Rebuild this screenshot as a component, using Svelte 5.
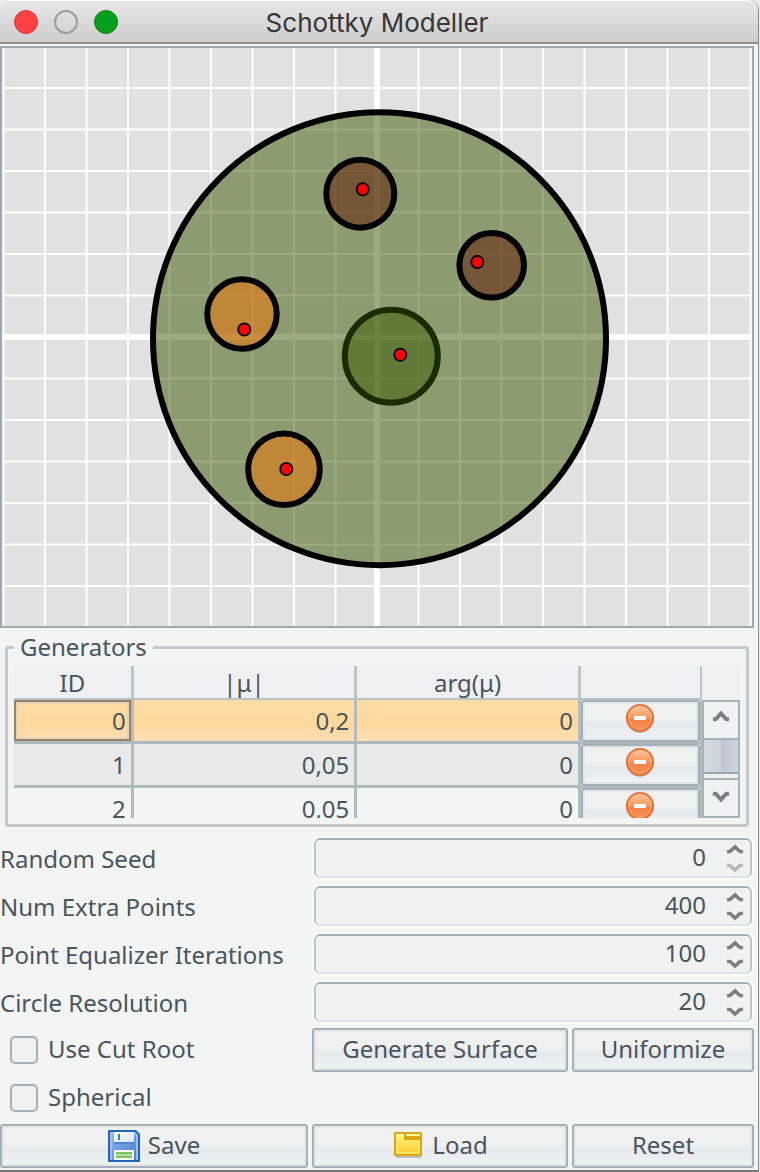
<script>
  const step = 41.5;
  const verticals = Array.from({ length: 19 }, (_, i) => 377 + (i - 9) * step);
  const horizontals = Array.from({ length: 13 }, (_, i) => 337 + (i - 6) * step);

  const discs = [
    { x: 360.3, y: 193.7, r: 34, fill: '#5e1200' },
    { x: 491.7, y: 265.3, r: 32.3, fill: '#5e1200' },
    { x: 242, y: 314, r: 34.7, fill: '#f67200' },
    { x: 284, y: 469.3, r: 35.8, fill: '#f67200' }
  ];

  const points = [
    [362.7, 189.3],
    [477.3, 262],
    [244.3, 329.5],
    [400.3, 354.8],
    [286.3, 469]
  ];

  let selected = $state(0);
  let rows = $state([
    { id: 0, mu: '0,2', arg: '0' },
    { id: 1, mu: '0,05', arg: '0' },
    { id: 2, mu: '0,05', arg: '0' }
  ]);

  let settings = $state([
    { key: 'seed', label: 'Random Seed', value: 0 },
    { key: 'extra', label: 'Num Extra Points', value: 400 },
    { key: 'iterations', label: 'Point Equalizer Iterations', value: 100 },
    { key: 'resolution', label: 'Circle Resolution', value: 20 }
  ]);

  function remove(id) {
    rows = rows.filter((row) => row.id !== id);
  }
</script>

{#snippet chevron(down, height)}
  <svg width="18" {height} viewBox="0 0 18 12" preserveAspectRatio="none" aria-hidden="true">
    <path
      d={down ? 'M1 2.5 4 3 9 8.5 14 3 17 2.5' : 'M1 9.5 4 9 9 3.5 14 9 17 9.5'}
      fill="none"
      stroke="#7e7e7e"
      stroke-width="4"
    />
  </svg>
{/snippet}

<main class="window">
  <header class="titlebar">
    <div class="lights">
      <button class="light close" aria-label="Close"></button>
      <button class="light minimize" aria-label="Minimize"></button>
      <button class="light zoom" aria-label="Zoom"></button>
    </div>
    <h1>Schottky Modeller</h1>
  </header>

  <div class="content">
    <div class="canvas">
      <svg viewBox="2 48 750 578" role="img" aria-label="Schottky circles">
        <rect x="2" y="48" width="750" height="578" fill="#e1e1e1" />
        <g stroke="#fff" stroke-width="2">
          {#each verticals as x, i}
            <line x1={x} x2={x} y1="48" y2="626" stroke-width={i === 9 ? 6 : 2} />
          {/each}
          {#each horizontals as y, i}
            <line x1="2" x2="752" y1={y} y2={y} stroke-width={i === 6 ? 6 : 2} />
          {/each}
        </g>
        <g stroke="#000" stroke-width="6" fill-opacity="0.5">
          <circle cx="391.3" cy="356.3" r="46.5" fill="#345a00" />
          <circle cx="379.5" cy="338.7" r="226.5" fill="#375700" />
          {#each discs as d}
            <circle cx={d.x} cy={d.y} r={d.r} fill={d.fill} />
          {/each}
        </g>
        <g fill="#f00" stroke="#000" stroke-width="1.8">
          {#each points as [x, y]}
            <circle cx={x} cy={y} r="6.1" />
          {/each}
        </g>
      </svg>
    </div>

    <fieldset class="generators">
      <legend>Generators</legend>
      <div class="viewport">
        <table>
          <colgroup>
            <col class="narrow" /><col class="wide" /><col class="wide" /><col class="action" />
          </colgroup>
          <thead>
            <tr><th>ID</th><th>|μ|</th><th>arg(μ)</th><th aria-label="Remove"></th></tr>
          </thead>
          <tbody>
            {#each rows as row, i (row.id)}
              <tr class:selected={selected === i} onclick={() => (selected = i)}>
                <td>{row.id}</td>
                <td>{row.mu}</td>
                <td>{row.arg}</td>
                <td class="cell-action">
                  <button class="push" aria-label="Remove generator {row.id}" onclick={() => remove(row.id)}>
                    <svg width="32" height="34" viewBox="0 0 32 34" aria-hidden="true">
                      <defs>
                        <linearGradient id="orb{row.id}" x1="0" y1="0" x2="0" y2="1">
                          <stop offset="0" stop-color="#ffc79c" />
                          <stop offset="0.48" stop-color="#f99a60" />
                          <stop offset="0.55" stop-color="#f28448" />
                          <stop offset="1" stop-color="#fb8c4c" />
                        </linearGradient>
                      </defs>
                      <ellipse cx="16" cy="17" rx="12.5" ry="13" fill="#c9b9b0" />
                      <circle cx="16" cy="15" r="13.2" fill="url(#orb{row.id})" stroke="#e0703a" stroke-width="1.8" />
                      <circle cx="16" cy="15" r="11" fill="none" stroke="#ffb98c" stroke-opacity="0.6" />
                      <rect x="10" y="13" width="12" height="4" fill="#fff" />
                    </svg>
                  </button>
                </td>
              </tr>
            {/each}
          </tbody>
        </table>
        <div class="scroll">
          <button class="arrow" aria-label="Scroll up">{@render chevron(false, 12)}</button>
          <div class="track"><div class="thumb"></div></div>
          <button class="arrow" aria-label="Scroll down">{@render chevron(true, 12)}</button>
        </div>
      </div>
    </fieldset>

    <div class="form">
      {#each settings as s (s.key)}
        <label class="caption" for={s.key}>{s.label}</label>
        <div class="spinner">
          <input id={s.key} type="text" inputmode="numeric" bind:value={s.value} />
          <div class="steps">
            <button aria-label="Increase {s.label}" onclick={() => (s.value = Number(s.value) + 1)}>
              {@render chevron(false, 10)}
            </button>
            <button
              aria-label="Decrease {s.label}"
              disabled={Number(s.value) <= 0}
              onclick={() => (s.value = Number(s.value) - 1)}
            >
              {@render chevron(true, 10)}
            </button>
          </div>
        </div>
      {/each}

      <label class="check"><input type="checkbox" /><span>Use Cut Root</span></label>
      <button class="push"><span>Generate Surface</span></button>
      <button class="push"><span>Uniformize</span></button>

      <label class="check full"><input type="checkbox" /><span>Spherical</span></label>

      <button class="push">
        <svg width="32" height="32" viewBox="0 0 32 32" aria-hidden="true">
          <defs>
            <linearGradient id="disk" x1="0" y1="0" x2="1" y2="1">
              <stop offset="0" stop-color="#8db4ee" />
              <stop offset="1" stop-color="#4a7fd0" />
            </linearGradient>
            <linearGradient id="shutter" x1="0" y1="0" x2="1" y2="1">
              <stop offset="0" stop-color="#fff" />
              <stop offset="1" stop-color="#d3e2f8" />
            </linearGradient>
          </defs>
          <path d="M1 0H28L32 4V31Q32 32 31 32H1Q0 32 0 31V1Q0 0 1 0Z" fill="#2264b8" />
          <path d="M2 2H27L30 5V30H2Z" fill="#9cc0f2" />
          <path d="M4 4H26L28 6V30H4Z" fill="url(#disk)" />
          <rect x="6" y="2" width="20" height="10" fill="url(#shutter)" />
          <rect x="10" y="4" width="2" height="6" fill="#3a78cb" />
          <rect x="6" y="12" width="20" height="2" fill="#5386cc" />
          <rect x="6" y="20" width="20" height="10" fill="#fff" />
          <rect x="8" y="22" width="16" height="6" fill="#7cc35d" />
          <rect x="8" y="24" width="16" height="2" fill="#b5dca3" />
          <rect x="2" y="30" width="28" height="2" fill="#2264b8" />
        </svg>
        <span>Save</span>
      </button>
      <button class="push">
        <svg width="32" height="32" viewBox="0 0 32 32" aria-hidden="true">
          <defs>
            <linearGradient id="folder" x1="0" y1="0" x2="0" y2="1">
              <stop offset="0" stop-color="#fff17a" />
              <stop offset="1" stop-color="#f8cb2e" />
            </linearGradient>
          </defs>
          <rect x="4" y="26" width="25" height="2" fill="#000" fill-opacity="0.2" />
          <rect x="2" y="2" width="28" height="24" rx="1" fill="#dba514" />
          <rect x="4" y="4" width="8" height="4" fill="#ffff9a" />
          <rect x="14" y="4" width="14" height="2" fill="#fffba5" />
          <path d="M4 6H12V10H28V24H4Z" fill="url(#folder)" />
          <path d="M4 22H28V24H4ZM26 10H28V24H26ZM4 10H6V24H4Z" fill="#fbe06b" />
        </svg>
        <span>Load</span>
      </button>
      <button class="push"><span>Reset</span></button>
    </div>
  </div>
</main>

<style>
  :global(body) {
    background: #e9ebea;
  }

  .window {
    box-sizing: border-box;
    margin-right: 1px;
    border-right: 1px solid #8b8d8c;
    border-bottom: 2px solid #747675;
    background: #f3f5f4;
    border-radius: 10px 10px 0 0;
    overflow: hidden;
    color: #4a545e;
    font: 24px/32px "Noto Sans", "Open Sans", sans-serif;
  }

  button,
  input {
    font: inherit;
    color: inherit;
    margin: 0;
    padding: 0;
  }

  svg {
    display: block;
    flex: none;
  }

  .titlebar {
    box-sizing: border-box;
    height: 44px;
    padding: 0 14px;
    display: grid;
    grid-template-columns: 1fr auto 1fr;
    align-items: center;
    border-top: 1px solid #f6f6f6;
    border-bottom: 2px solid #918f89;
    background: linear-gradient(#e7e7e7, #cdcdcd);
  }

  .lights {
    display: flex;
    gap: 16px;
  }

  .light {
    box-sizing: border-box;
    width: 24px;
    height: 24px;
    border: 1px solid;
    border-radius: 50%;
  }

  .close {
    background: #ff4141;
    border-color: #dd3237;
  }

  .minimize {
    background: transparent;
    border: 2px solid #9c9c9c;
  }

  .zoom {
    background: #07a01c;
    border-color: #0a8412;
  }

  h1 {
    margin: 0;
    padding: 2px 4px 0 0;
    color: #363636;
    font: 400 26px/36px Inter, Roboto, sans-serif;
  }

  .content {
    padding: 2px 4px 2px 0;
  }

  .canvas {
    border: 2px solid #9ca9b1;
  }

  .canvas svg {
    width: 100%;
    height: auto;
  }

  .generators {
    margin: 3px 5px 0;
    padding: 3px 6px 6px;
    border: 3px solid #c2c8cb;
    border-radius: 3px;
    min-width: 0;
  }

  legend {
    padding: 0 6px;
  }

  .viewport {
    display: flex;
    height: 152px;
    overflow: hidden;
    background: #eff0f2;
  }

  table {
    flex: 1;
    min-width: 0;
    height: max-content;
    table-layout: fixed;
    border-collapse: separate;
    border-spacing: 0;
    background: #f3f5f4;
  }

  .narrow {
    width: 17.4%;
  }

  .wide {
    width: 32.5%;
  }

  th,
  td {
    box-sizing: border-box;
    padding: 0 5px;
    border-right: 3px solid #b1bcc1;
    border-bottom: 3px solid #adb8bd;
  }

  th {
    height: 34px;
    padding-top: 2px;
    line-height: 30px;
    border-right-color: #bcc5ca;
    border-bottom: 2px solid #b8c2c7;
    background: #eff0f2;
    font-weight: 400;
    text-align: center;
  }

  th:last-child {
    border-right-width: 2px;
  }

  td {
    height: 44px;
    text-align: right;
  }

  tbody tr:nth-child(even) {
    background: #e8eae9;
  }

  tbody tr.selected td:not(.cell-action) {
    background: linear-gradient(#ffdda8, #ffd89c 60%, #ffdfb5);
  }

  tbody tr.selected td:first-child {
    box-shadow: inset 0 0 0 2px #98815f, inset 0 0 0 4px #e3d4bf;
  }

  td.cell-action {
    padding: 0;
    border-right-width: 2px;
    border-bottom-width: 2px;
  }

  .push {
    box-sizing: border-box;
    height: 44px;
    min-width: 0;
    display: flex;
    align-items: center;
    justify-content: center;
    gap: 8px;
    border: 2px solid #a3b0b7;
    border-radius: 3px;
    background: linear-gradient(#eff1f1 0 50%, #e5e9ed 54%, #f1f3f4);
    box-shadow: inset 0 0 0 2px #e3e7ea;
    white-space: nowrap;
  }

  .cell-action .push {
    width: 100%;
    height: 42px;
    padding-bottom: 2px;
  }

  .push span,
  .check span {
    padding-bottom: 2px;
  }

  .scroll {
    width: 38px;
    padding-top: 34px;
    box-sizing: border-box;
    display: flex;
    flex-direction: column;
  }

  .arrow {
    box-sizing: border-box;
    height: 40px;
    flex: none;
    display: grid;
    place-items: center;
    border: 2px solid #a7b3b9;
    background: #f0f1f2;
  }

  .arrow:first-child {
    padding-bottom: 8px;
  }

  .arrow:last-child {
    padding-bottom: 2px;
  }

  .track {
    flex: 1;
    padding-bottom: 4px;
    border: solid #a7b3b9;
    border-width: 0 2px;
  }

  .thumb {
    box-sizing: border-box;
    height: 100%;
    border-bottom: 2px solid #9aa7b0;
    background: linear-gradient(90deg, #d5dae2, #ccd2dc 50%, #bec5d0 52%, #d0d5de);
  }

  .form {
    margin-top: 9px;
    display: grid;
    grid-template-columns: 308fr 256fr 182fr;
    grid-auto-rows: 44px;
    gap: 4px;
  }

  .caption,
  .check {
    display: flex;
    align-items: center;
    white-space: nowrap;
  }

  .caption {
    padding-top: 2px;
  }

  .spinner {
    grid-column: span 2;
    margin: 2px;
    display: flex;
    border: 2px solid;
    border-color: #a3b0b6 #bcc5ca #dde0e4 #bcc5ca;
    border-radius: 6px;
    background: #f0f2f1;
    box-shadow: 0 0 0 2px #fafbfb;
  }

  .spinner input {
    flex: 1;
    min-width: 0;
    padding: 0 16px 2px 10px;
    border: 0;
    background: none;
    text-align: right;
    outline: none;
  }

  .steps {
    width: 28px;
    display: flex;
    flex-direction: column;
    gap: 2px;
  }

  .steps button {
    flex: 1;
    display: grid;
    place-items: center start;
    padding-left: 4px;
    border: 0;
    background: none;
  }

  .steps button:disabled {
    opacity: 0.5;
  }

  .check {
    gap: 10px;
    padding-left: 10px;
  }

  .check.full {
    grid-column: 1 / -1;
  }

  .check input {
    appearance: none;
    box-sizing: border-box;
    width: 28px;
    height: 28px;
    border: 2px solid #a3b0b7;
    border-radius: 5px;
    background: #f0f2f2;
  }

  .check input:checked {
    background: #8795a0;
  }
</style>
